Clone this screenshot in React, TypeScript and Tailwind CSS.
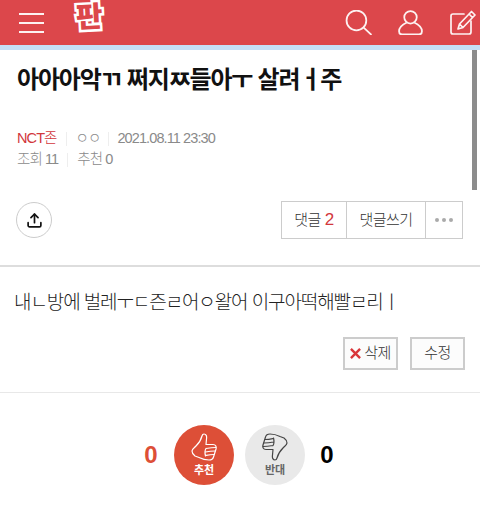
import { Upload } from 'lucide-react';

const font = { fontFamily: '"Liberation Sans", "Noto Sans CJK KR", sans-serif' };

function ThumbUp({ className }: { className?: string }) {
  return (
    <svg viewBox="0 0 26 28" fill="none" stroke="currentColor" strokeWidth="1.2" strokeLinejoin="round" strokeLinecap="round" className={className}>
      <path d="M13 1C15 1 16 3 15.500 6L15 11.500L22 11.500C25 11.500 25.500 14 25 16L22.500 24C22 26 20 27 18 27C14 27 11 26 8 24.500L4 23C2 21.500 1 20 1 18C1 16 3 15 5 13C8 10 10 7 11 3C11.300 1.800 12 1 13 1Z" />
      <path d="M15 15.500C18 15 21 14.500 24.800 14.500M14.500 19C17 18.500 20 18 24 18M14.500 22.500C17 22 19 21.500 23 21.500M15 15.500C14 17 14 21 14.500 23" />
    </svg>
  );
}

export default function App() {
  return (
    <div style={font} className="relative h-[517px] w-[480px] overflow-hidden bg-white text-[#222]">
      {/* Header */}
      <header className="relative flex h-[45px] items-center bg-[#dc474b] pl-[19px] text-[#fdf2f2]">
        <div className="flex w-[25px] flex-col gap-[7px]">
          <span className="h-[2px] bg-[#fdf2f2]" />
          <span className="h-[2px] bg-[#fdf2f2]" />
          <span className="h-[2px] bg-[#fdf2f2]" />
        </div>
        <span className="absolute left-[76px] top-[2px] -rotate-3 text-[29px] font-black leading-[30px] text-[#dc474b] [-webkit-text-stroke:5px_white] [paint-order:stroke_fill]">
          판
        </span>
        <div className="ml-auto flex items-center pr-[4px]">
          <svg viewBox="0 0 26 24" width="27" height="25" fill="none" stroke="currentColor" strokeWidth="1.7" strokeLinecap="round">
            <circle cx="11" cy="10" r="9.500" />
            <path d="M18 17l7 6.500" />
          </svg>
          <svg viewBox="0 0 24 24" width="25" height="25" fill="none" stroke="currentColor" strokeWidth="1.7" strokeLinejoin="round" className="ml-[26px]">
            <circle cx="12" cy="7" r="6" />
            <path d="M8.500 12C4 14 1 17 1 20.500C1 22.500 2 23.500 4 23.500H20C22 23.500 23 22.500 23 20.500C23 17 20 14 15.500 12" />
          </svg>
          <svg viewBox="0 0 26 25" width="26" height="25" fill="none" stroke="currentColor" strokeWidth="1.7" strokeLinejoin="round" strokeLinecap="round" className="ml-[27px]">
            <path d="M14 4H3C1.800 4 1 4.800 1 6V22C1 23.200 1.800 24 3 24H19C20.200 24 21 23.200 21 22V11" />
            <path d="M21.500 1.500L25 5L13 17.500L8 19L9.500 14ZM19 4L22.500 7.500M9.500 14L13 17.500" />
          </svg>
        </div>
      </header>
      <div className="h-[5px] bg-[#c5e0f7]" />

      {/* Title */}
      <h1 className="pl-[17px] pt-[12px] text-[24px] font-bold leading-[36px] tracking-[-1.2px] text-[#111]">
        아아아악ㄲ 쩌지ㅉ들아ㅜ 살려ㅓ주
      </h1>

      {/* Meta */}
      <div className="pl-[17px] pt-[30px] text-[14.5px] font-light leading-[21px] tracking-[-0.9px] text-[#8a8a8a]">
        <div className="flex items-center">
          <span className="text-[#d2373c]">NCT존</span>
          <span className="mx-[9px] h-[14px] w-px bg-[#eee]" />
          <span>ㅇㅇ</span>
          <span className="mx-[8px] h-[14px] w-px bg-[#eee]" />
          <span>2021.08.11 23:30</span>
        </div>
        <div className="flex items-center">
          <span>조회 11</span>
          <span className="mx-[9px] h-[14px] w-px bg-[#eee]" />
          <span>추천 0</span>
        </div>
      </div>

      {/* Actions */}
      <div className="flex items-center justify-between pl-[16px] pr-[17px] pt-[31px]">
        <button className="flex h-[36px] w-[36px] items-center justify-center rounded-full border border-[#ccc] text-[#111]">
          <Upload size={17} strokeWidth={2.4} />
        </button>
        <div className="flex h-[38px] border border-[#ccc] text-[15px] font-light tracking-[-0.5px] text-[#333]">
          <span className="flex w-[64px] items-center justify-center gap-1">
            댓글<span className="text-[17px] text-[#d2373c]">2</span>
          </span>
          <span className="flex w-[79px] items-center justify-center border-l border-[#ccc]">댓글쓰기</span>
          <span className="flex w-[37px] items-center justify-center gap-[3px] border-l border-[#ccc]">
            <i className="h-[4px] w-[4px] rounded-full bg-[#aaa]" />
            <i className="h-[4px] w-[4px] rounded-full bg-[#aaa]" />
            <i className="h-[4px] w-[4px] rounded-full bg-[#aaa]" />
          </span>
        </div>
      </div>

      <div className="mt-[26px] h-[2px] bg-[#ddd]" />

      {/* Body */}
      <p className="pl-[14px] pt-[22px] text-[19px] font-light leading-[28px] tracking-[-1.1px] text-[#222]">
        내ㄴ방에 벌레ㅜㄷ즌ㄹ어ㅇ왈어 이구아떡해빨ㄹ리ㅣ
      </p>

      <div className="flex justify-end gap-[12px] pr-[15px] pt-[20px] text-[15px] font-light tracking-[-0.5px] text-[#333]">
        <button className="flex h-[33px] w-[55px] items-center justify-center gap-[3px] border-2 border-[#ccc] bg-[#fcfcfc]">
          <svg viewBox="0 0 12 12" width="11" height="11" fill="none" stroke="#d9363a" strokeWidth="2.600">
            <path d="M1 1l10 10M11 1L1 11" />
          </svg>
          삭제
        </button>
        <button className="flex h-[33px] w-[55px] items-center justify-center border-2 border-[#ccc] bg-[#fcfcfc]">수정</button>
      </div>

      <div className="mt-[22px] h-px bg-[#e8e8e8]" />

      {/* Votes */}
      <div className="flex items-center pl-[143px] pt-[32px]">
        <span className="w-[16px] text-center text-[24px] font-bold text-[#dd4f37]">0</span>
        <div className="ml-[15px] flex h-[60px] w-[60px] flex-col items-center justify-center rounded-full bg-[#dd4f37] text-white">
          <ThumbUp className="h-[28px] w-[26px]" />
          <span className="mt-[2px] text-[11px] font-bold leading-[14px]">추천</span>
        </div>
        <div className="ml-[11px] flex h-[60px] w-[60px] flex-col items-center justify-center rounded-full bg-[#e9e9e9] text-[#444]">
          <ThumbUp className="h-[28px] w-[26px] rotate-180" />
          <span className="mt-[2px] text-[11px] font-bold leading-[14px] text-[#666]">반대</span>
        </div>
        <span className="ml-[14px] w-[16px] text-center text-[24px] font-bold text-black">0</span>
      </div>

      {/* Scrollbar overlay */}
      <div className="absolute right-[3px] top-[50px] h-[140px] w-[5px] bg-[#8c8c8c]" />
    </div>
  );
}
